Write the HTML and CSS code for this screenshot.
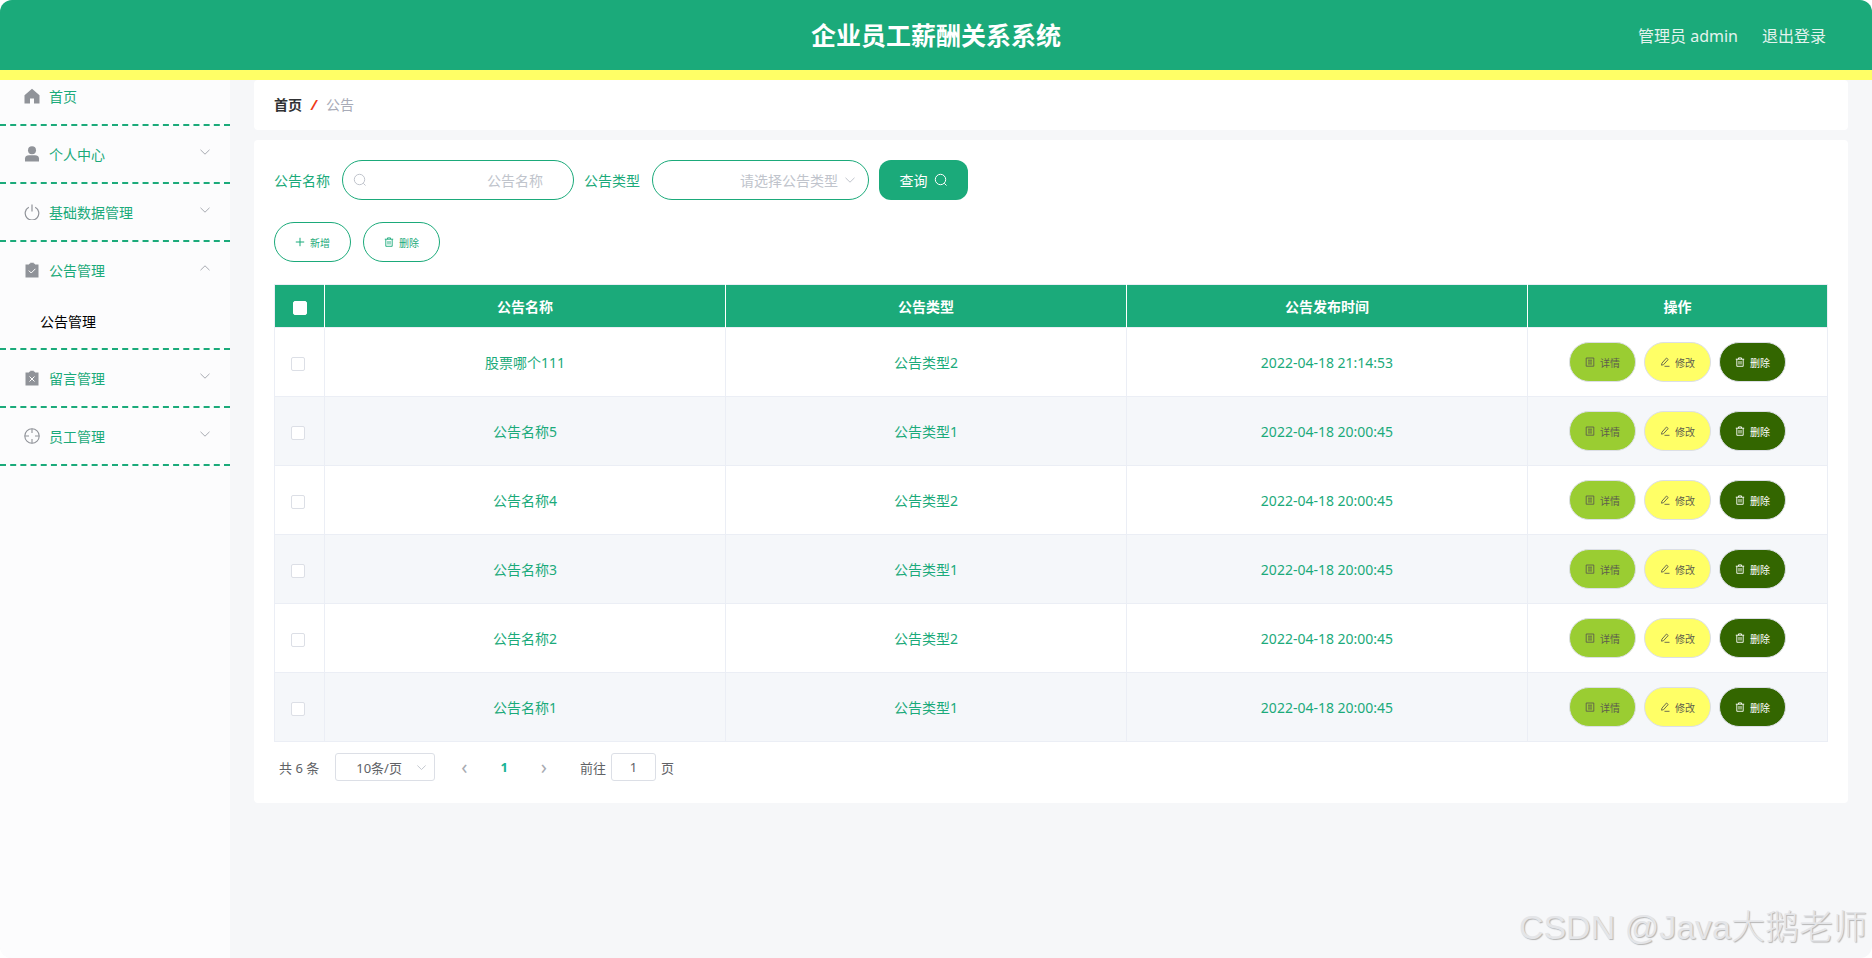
FILE: index.html
```html
<!DOCTYPE html>
<html lang="zh-CN">
<head>
    <meta charset="UTF-8">
    <meta name="viewport" content="width=device-width, initial-scale=1.0">
    <title>企业员工薪酬关系系统</title>
    <link rel="stylesheet" href="styles.css">
</head>
<body>
    <svg class="icon-defs" aria-hidden="true">
        <symbol id="i-home" viewBox="0 0 16 16"><path fill="currentColor" d="M8 0.800 0.500 7.200V15.500H6V10.500H10V15.500H15.500V7.200Z"/></symbol>
        <symbol id="i-user" viewBox="0 0 16 16"><circle fill="currentColor" cx="8" cy="4.200" r="4"/><path fill="currentColor" d="M1 15.500v-3C1 10.400 2.800 9.300 5 9.300h6c2.200 0 4 1.100 4 3.200v3Z"/></symbol>
        <symbol id="i-power" viewBox="0 0 16 16"><path fill="none" stroke="currentColor" stroke-width="1.200" d="M4.800 3.200a6.800 6.800 0 1 0 6.400 0"/><path fill="none" stroke="currentColor" stroke-width="1.200" d="M8 0.500V7.500"/></symbol>
        <symbol id="i-check" viewBox="0 0 16 16"><path fill="currentColor" d="M1.500 2.500H5V1.800H6.200V0.800H9.800V1.800H11V2.500H14.500V15.500H1.500Z"/><path fill="none" stroke="#fff" stroke-width="1" d="M4.800 8.600 7.200 11 11.400 6.800"/></symbol>
        <symbol id="i-cross" viewBox="0 0 16 16"><path fill="currentColor" d="M1.500 2.500H5V1.800H6.200V0.800H9.800V1.800H11V2.500H14.500V15.500H1.500Z"/><path fill="none" stroke="#fff" stroke-width="1" d="M5.500 6.500 10.500 11.500M10.500 6.500 5.500 11.500"/></symbol>
        <symbol id="i-aim" viewBox="0 0 16 16"><circle fill="none" stroke="currentColor" stroke-width="1.100" cx="8" cy="8" r="7.200"/><path fill="none" stroke="currentColor" stroke-width="1.100" d="M8 0.800V5M8 11V15.200M0.800 8H5M11 8H15.200"/></symbol>
        <symbol id="i-down" viewBox="0 0 12 12"><path fill="none" stroke="currentColor" stroke-width="1" d="M1.500 3.800 6 8.200 10.500 3.800"/></symbol>
        <symbol id="i-up" viewBox="0 0 12 12"><path fill="none" stroke="currentColor" stroke-width="1" d="M1.500 8.200 6 3.800 10.500 8.200"/></symbol>
        <symbol id="i-search" viewBox="0 0 14 14"><circle fill="none" stroke="currentColor" stroke-width="1" cx="6.500" cy="6.500" r="5.200"/><path fill="none" stroke="currentColor" stroke-width="1" d="M10.300 10.300 12.500 12.500"/></symbol>
        <symbol id="i-plus" viewBox="0 0 10 10"><path fill="none" stroke="currentColor" stroke-width="1" d="M5 0.800V9.200M0.800 5H9.200"/></symbol>
        <symbol id="i-trash" viewBox="0 0 10 10"><path fill="none" stroke="currentColor" stroke-width="0.900" d="M0.800 2.200H9.200M3.500 2.200V0.900H6.500V2.200M1.800 2.200V9.300H8.200V2.200M4 4V7.500M6 4V7.500"/></symbol>
        <symbol id="i-doc" viewBox="0 0 10 10"><path fill="none" stroke="currentColor" stroke-width="0.900" d="M1.200 1H8.800V9.200H1.200ZM3 3.200H7M3 5H7M3 6.900H7"/></symbol>
        <symbol id="i-edit" viewBox="0 0 10 10"><path fill="none" stroke="currentColor" stroke-width="0.900" d="M6.500 1 8.200 2.500 3.500 7.700 1.500 8.200 1.900 6.200ZM4.500 9.300H9.500"/></symbol>
    </svg>

    <div class="app">
        <header class="topbar">
            <h1 class="topbar-title">企业员工薪酬关系系统</h1>
            <div class="topbar-user">
                <span>管理员 admin</span>
                <span>退出登录</span>
            </div>
        </header>

        <div class="layout">
            <nav class="sidebar">
                <div class="menu-item">
                    <div class="menu-title"><svg class="menu-icon"><use href="#i-home"/></svg><span>首页</span></div>
                </div>
                <div class="menu-item">
                    <div class="menu-title"><svg class="menu-icon"><use href="#i-user"/></svg><span>个人中心</span><svg class="menu-arrow"><use href="#i-down"/></svg></div>
                </div>
                <div class="menu-item">
                    <div class="menu-title"><svg class="menu-icon"><use href="#i-power"/></svg><span>基础数据管理</span><svg class="menu-arrow"><use href="#i-down"/></svg></div>
                </div>
                <div class="menu-item">
                    <div class="menu-title"><svg class="menu-icon"><use href="#i-check"/></svg><span>公告管理</span><svg class="menu-arrow"><use href="#i-up"/></svg></div>
                    <div class="menu-sub">公告管理</div>
                </div>
                <div class="menu-item">
                    <div class="menu-title"><svg class="menu-icon"><use href="#i-cross"/></svg><span>留言管理</span><svg class="menu-arrow"><use href="#i-down"/></svg></div>
                </div>
                <div class="menu-item">
                    <div class="menu-title"><svg class="menu-icon"><use href="#i-aim"/></svg><span>员工管理</span><svg class="menu-arrow"><use href="#i-down"/></svg></div>
                </div>
            </nav>

            <main class="main">
                <div class="card breadcrumb">
                    <b>首页</b><i class="breadcrumb-sep">/</i><span>公告</span>
                </div>

                <section class="card content">
                    <div class="search-row">
                        <label class="search-label">公告名称</label>
                        <div class="field field-name">
                            <svg class="field-search"><use href="#i-search"/></svg>
                            <input class="field-input" placeholder="公告名称">
                        </div>
                        <label class="search-label">公告类型</label>
                        <div class="field field-type">
                            <span class="field-placeholder">请选择公告类型</span>
                            <svg class="field-arrow"><use href="#i-down"/></svg>
                        </div>
                        <button class="btn-query">查询<svg class="btn-query-icon"><use href="#i-search"/></svg></button>
                    </div>

                    <div class="action-row">
                        <button class="btn-outline"><svg class="btn-icon"><use href="#i-plus"/></svg>新增</button>
                        <button class="btn-outline"><svg class="btn-icon"><use href="#i-trash"/></svg>删除</button>
                    </div>

                    <table class="grid">
                        <colgroup>
                            <col class="col-check"><col class="col-data"><col class="col-data"><col class="col-data"><col>
                        </colgroup>
                        <thead>
                            <tr>
                                <th><span class="check check-head"></span></th>
                                <th>公告名称</th>
                                <th>公告类型</th>
                                <th>公告发布时间</th>
                                <th>操作</th>
                            </tr>
                        </thead>
                        <tbody>
                            <tr>
                                <td><span class="check"></span></td>
                                <td>股票哪个111</td>
                                <td>公告类型2</td>
                                <td>2022-04-18 21:14:53</td>
                                <td><div class="ops"><button class="op op-detail"><svg class="btn-icon"><use href="#i-doc"/></svg>详情</button><button class="op op-edit"><svg class="btn-icon"><use href="#i-edit"/></svg>修改</button><button class="op op-del"><svg class="btn-icon"><use href="#i-trash"/></svg>删除</button></div></td>
                            </tr>
                            <tr>
                                <td><span class="check"></span></td>
                                <td>公告名称5</td>
                                <td>公告类型1</td>
                                <td>2022-04-18 20:00:45</td>
                                <td><div class="ops"><button class="op op-detail"><svg class="btn-icon"><use href="#i-doc"/></svg>详情</button><button class="op op-edit"><svg class="btn-icon"><use href="#i-edit"/></svg>修改</button><button class="op op-del"><svg class="btn-icon"><use href="#i-trash"/></svg>删除</button></div></td>
                            </tr>
                            <tr>
                                <td><span class="check"></span></td>
                                <td>公告名称4</td>
                                <td>公告类型2</td>
                                <td>2022-04-18 20:00:45</td>
                                <td><div class="ops"><button class="op op-detail"><svg class="btn-icon"><use href="#i-doc"/></svg>详情</button><button class="op op-edit"><svg class="btn-icon"><use href="#i-edit"/></svg>修改</button><button class="op op-del"><svg class="btn-icon"><use href="#i-trash"/></svg>删除</button></div></td>
                            </tr>
                            <tr>
                                <td><span class="check"></span></td>
                                <td>公告名称3</td>
                                <td>公告类型1</td>
                                <td>2022-04-18 20:00:45</td>
                                <td><div class="ops"><button class="op op-detail"><svg class="btn-icon"><use href="#i-doc"/></svg>详情</button><button class="op op-edit"><svg class="btn-icon"><use href="#i-edit"/></svg>修改</button><button class="op op-del"><svg class="btn-icon"><use href="#i-trash"/></svg>删除</button></div></td>
                            </tr>
                            <tr>
                                <td><span class="check"></span></td>
                                <td>公告名称2</td>
                                <td>公告类型2</td>
                                <td>2022-04-18 20:00:45</td>
                                <td><div class="ops"><button class="op op-detail"><svg class="btn-icon"><use href="#i-doc"/></svg>详情</button><button class="op op-edit"><svg class="btn-icon"><use href="#i-edit"/></svg>修改</button><button class="op op-del"><svg class="btn-icon"><use href="#i-trash"/></svg>删除</button></div></td>
                            </tr>
                            <tr>
                                <td><span class="check"></span></td>
                                <td>公告名称1</td>
                                <td>公告类型1</td>
                                <td>2022-04-18 20:00:45</td>
                                <td><div class="ops"><button class="op op-detail"><svg class="btn-icon"><use href="#i-doc"/></svg>详情</button><button class="op op-edit"><svg class="btn-icon"><use href="#i-edit"/></svg>修改</button><button class="op op-del"><svg class="btn-icon"><use href="#i-trash"/></svg>删除</button></div></td>
                            </tr>
                        </tbody>
                    </table>

                    <div class="pager">
                        <span class="pager-total">共 6 条</span>
                        <div class="pager-size"><span>10条/页</span><svg class="pager-size-arrow"><use href="#i-down"/></svg></div>
                        <span class="pager-prev">‹</span>
                        <b class="pager-num">1</b>
                        <span class="pager-next">›</span>
                        <span class="pager-goto">前往</span>
                        <span class="pager-box">1</span>
                        <span>页</span>
                    </div>
                </section>
            </main>
        </div>

        <div class="watermark">CSDN @Java大鹅老师</div>
    </div>
</body>
</html>
```
FILE: styles.css
```css
:root {
    --green: #1baa7a;
    --yellow: #ffff66;
    --line: #ebeef5;
    --grey-text: #606266;
    --placeholder: #c0c4cc;
    --font-base: "Noto Sans", "Noto Sans CJK SC", sans-serif;
}

* {
    margin: 0;
    padding: 0;
    box-sizing: border-box;
}

body {
    font-family: var(--font-base);
    font-size: 14px;
    background: #fff;
}

button,
input {
    font-family: inherit;
}

.icon-defs {
    display: none;
}

.app {
    position: relative;
    height: 100vh;
    display: flex;
    flex-direction: column;
    overflow: hidden;
    border-radius: 12px;
    background: #f6f7f9;
}

/* top bar */
.topbar {
    position: relative;
    z-index: 2;
    flex: none;
    height: 80px;
    display: flex;
    align-items: center;
    justify-content: center;
    background: var(--green);
    border-bottom: 10px solid var(--yellow);
    color: #fff;
}

.topbar-title {
    font-size: 25px;
    font-weight: 700;
    line-height: 70px;
}

.topbar-user {
    position: absolute;
    top: 0;
    right: 46px;
    height: 70px;
    display: flex;
    align-items: center;
    gap: 24px;
    font-size: 16px;
    color: #e3f3ee;
}

.layout {
    flex: 1;
    display: flex;
    min-height: 0;
}

/* side menu */
.sidebar {
    flex: none;
    width: 230px;
    margin-top: -12px;
    background: #fcfcfd;
}

.menu-item {
    border-bottom: 2px dashed var(--green);
}

.menu-title {
    height: 56px;
    display: flex;
    align-items: center;
    padding: 0 19px 0 24px;
    color: var(--green);
}

.menu-icon {
    flex: none;
    width: 16px;
    height: 16px;
    margin-right: 9px;
    color: #909399;
}

.menu-arrow {
    flex: none;
    width: 12px;
    height: 12px;
    margin: -4px 0 0 auto;
    color: #a8abb2;
}

.menu-sub {
    height: 50px;
    line-height: 48px;
    padding-left: 40px;
    color: #000;
}

/* main area */
.main {
    flex: 1;
    min-width: 0;
    padding: 0 24px;
}

.card {
    background: #fff;
    border-radius: 4px;
}

.breadcrumb {
    height: 50px;
    display: flex;
    align-items: center;
    padding: 0 0 2px 20px;
    color: #a8abb8;
}

.breadcrumb b {
    color: #303133;
}

.breadcrumb-sep {
    margin: 0 9px;
    color: #f03a17;
    font-weight: 700;
}

.content {
    margin-top: 10px;
    height: 663px;
    padding: 20px;
}

.search-row {
    display: flex;
    align-items: center;
    height: 40px;
}

.search-label {
    color: var(--green);
    margin-right: 12px;
}

.field {
    position: relative;
    height: 40px;
    display: flex;
    align-items: center;
    justify-content: flex-end;
    border: 1px solid var(--green);
    border-radius: 20px;
    background: #fff;
}

.field-name {
    width: 232px;
    margin-right: 10px;
}

.field-type {
    width: 217px;
    margin-right: 10px;
    padding-right: 12px;
}

.field-search {
    position: absolute;
    left: 10px;
    top: 12px;
    width: 14px;
    height: 14px;
    color: var(--placeholder);
}

.field-input {
    width: 100%;
    height: 100%;
    border: 0;
    outline: 0;
    background: transparent;
    padding: 0 30px 0 36px;
    font-size: 14px;
    text-align: right;
}

.field-input::placeholder {
    color: var(--placeholder);
}

.field-placeholder {
    color: var(--placeholder);
}

.field-arrow {
    width: 12px;
    height: 12px;
    margin-left: 6px;
    color: var(--placeholder);
}

.btn-query {
    width: 89px;
    height: 40px;
    display: flex;
    align-items: center;
    justify-content: center;
    gap: 6px;
    border: 0;
    border-radius: 12px;
    background: var(--green);
    color: #fff;
    font-size: 14px;
}

.btn-query-icon {
    width: 14px;
    height: 14px;
}

.action-row {
    display: flex;
    gap: 12px;
    margin-top: 22px;
}

.btn-outline {
    width: 77px;
    height: 40px;
    display: flex;
    align-items: center;
    justify-content: center;
    border: 1px solid var(--green);
    border-radius: 20px;
    background: #fff;
    color: var(--green);
    font-size: 10px;
}

.btn-icon {
    flex: none;
    width: 10px;
    height: 10px;
    margin-right: 5px;
}

/* table */
.grid {
    width: 1554px;
    margin-top: 22px;
    border-collapse: collapse;
    table-layout: fixed;
    border: 1px solid var(--line);
    color: var(--green);
}

.col-check {
    width: 50px;
}

.col-data {
    width: 401px;
}

.grid th {
    height: 43px;
    background: var(--green);
    color: #fff;
    font-size: 14px;
    font-weight: 700;
    border-right: 1px solid #fff;
}

.grid th:last-child {
    border-right: 0;
}

.grid td {
    height: 69px;
    text-align: center;
    border: 1px solid var(--line);
}

.grid tbody tr:nth-child(even) td {
    background: #f5f7fa;
}

.check {
    display: inline-block;
    width: 14px;
    height: 14px;
    margin: 0 3px 0 0;
    vertical-align: middle;
    border: 1px solid #dcdfe6;
    border-radius: 2px;
    background: #fff;
}

.check-head {
    margin: 0;
    border-color: #fff;
}

.ops {
    display: flex;
    justify-content: center;
    gap: 8px;
}

.op {
    width: 67px;
    height: 40px;
    display: flex;
    align-items: center;
    justify-content: center;
    border: 1px solid #dcdfe6;
    border-radius: 20px;
    font-size: 10px;
    color: #5d5d4d;
}

.op-detail {
    background: #9acd32;
}

.op-edit {
    background: var(--yellow);
}

.op-del {
    background: #336600;
    color: #fff;
}

/* pager */
.pager {
    display: flex;
    align-items: center;
    height: 28px;
    margin-top: 11px;
    padding-left: 5px;
    font-size: 13px;
    color: var(--grey-text);
}

.pager-size {
    width: 100px;
    height: 28px;
    margin-left: 16px;
    display: flex;
    align-items: center;
    padding: 0 7px 0 20px;
    border: 1px solid #dcdfe6;
    border-radius: 3px;
}

.pager-size-arrow {
    width: 11px;
    height: 11px;
    margin-left: auto;
    color: var(--placeholder);
}

.pager-prev,
.pager-next {
    font-size: 20px;
    line-height: 24px;
    color: #a8abb2;
}

.pager-prev {
    margin-left: 26px;
}

.pager-num {
    margin: 0 33px;
    color: #19b394;
}

.pager-goto {
    margin-left: 33px;
}

.pager-box {
    width: 45px;
    height: 28px;
    margin: 0 5px;
    line-height: 26px;
    text-align: center;
    border: 1px solid #dcdfe6;
    border-radius: 3px;
}

.watermark {
    position: absolute;
    right: 5px;
    bottom: 7px;
    font-family: "Liberation Sans", "Noto Sans CJK SC", sans-serif;
    font-size: 34px;
    font-weight: 300;
    line-height: 48px;
    color: #e4e5e8;
    text-shadow: 1px 1px 1px #b4b4b4;
    pointer-events: none;
}
```
